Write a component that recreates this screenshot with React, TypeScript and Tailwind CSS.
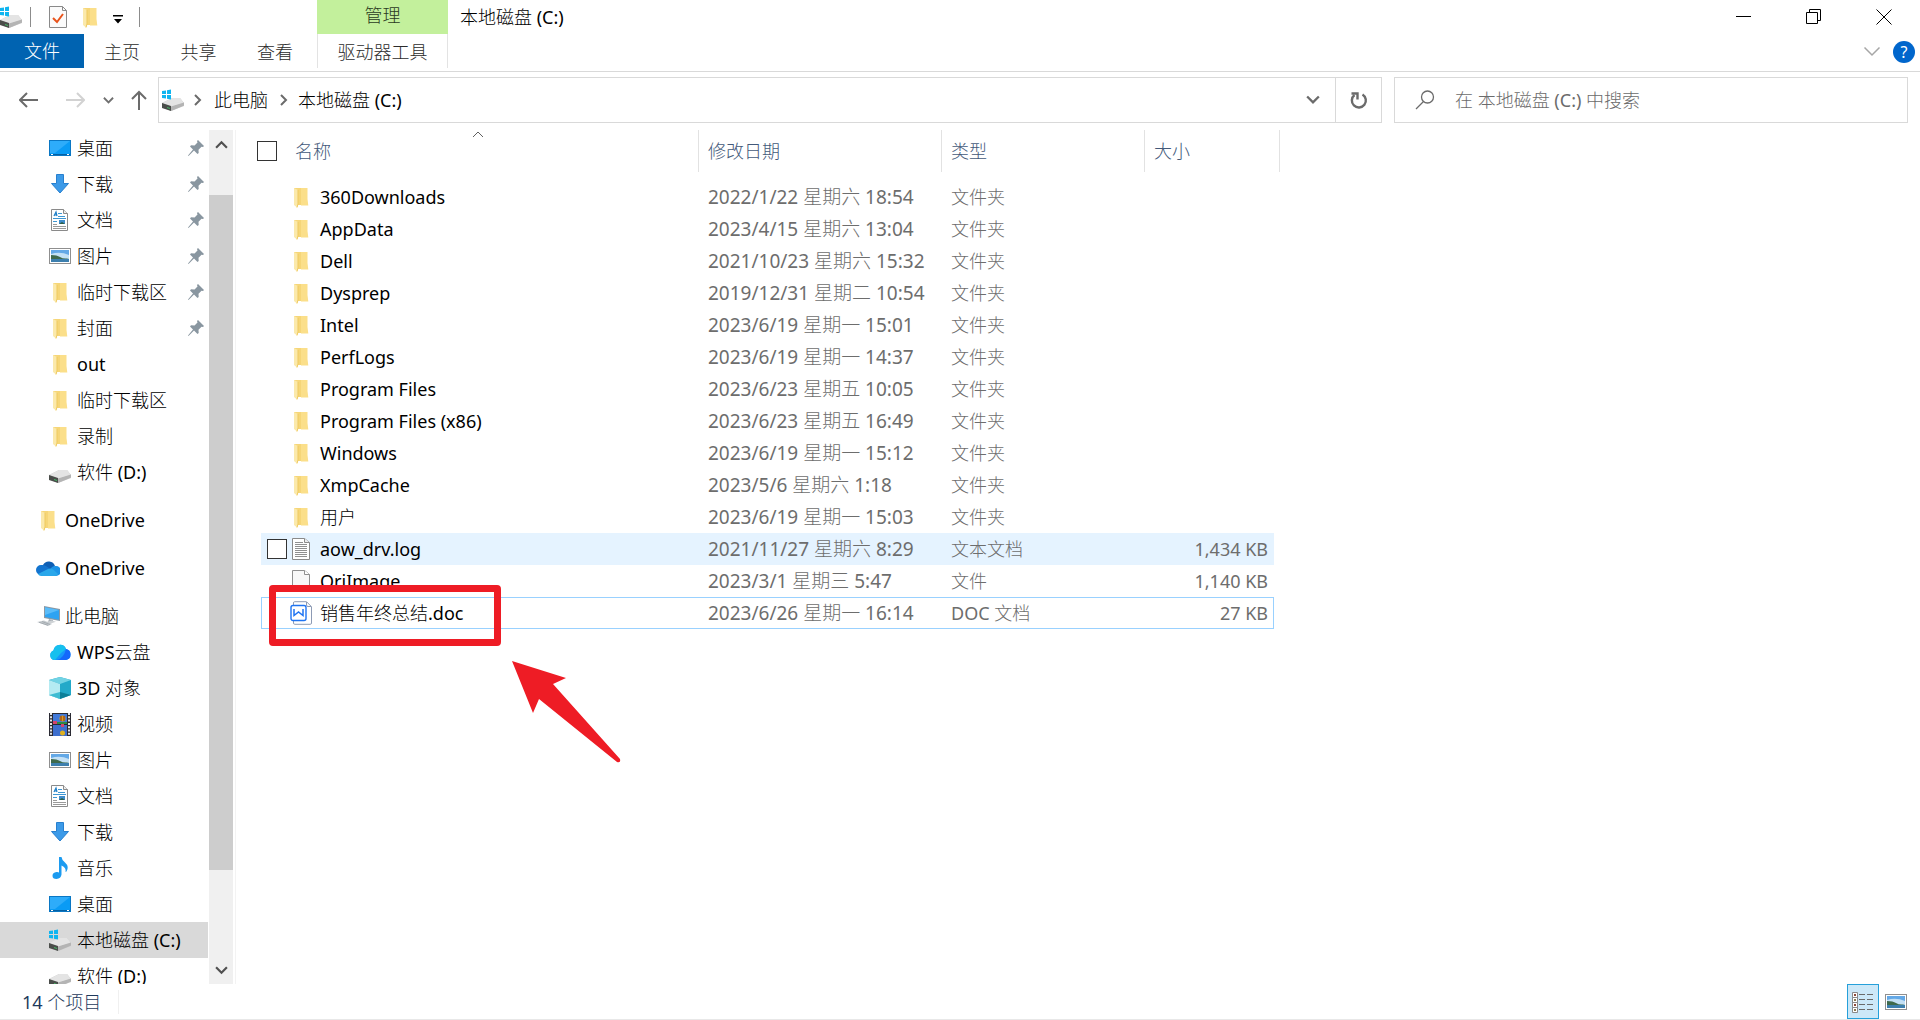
import type { ReactNode } from 'react';

/* ---------- Icons ---------- */

function FolderIcon() {
    return (
        <svg className="w-[15px] h-[21px] shrink-0" viewBox="0 0 15 21">
            <path d="M0 1h12v13l1.500 4H0z" fill="#f6d678" />
            <path d="M7 1h6.500v11l.8 6.500H7z" fill="#fbdf8a" />
            <path d="M0 1l4 2v14l-1 3.500L0 18z" fill="#fbe9ab" />
            <path d="M4 3v14l-1 3.500" fill="none" stroke="#eec95f" strokeWidth="1" />
        </svg>
    );
}

function DriveIcon({ system }: { system?: boolean }) {
    return (
        <svg className="w-[22px] h-[22px] shrink-0" viewBox="0 0 22 22">
            <path d="M0 14l10-5h8l4 5v3l-13 5-9-4z" fill="#c9c9c9" />
            <path d="M0 14l10-5h8l4 5-13 4z" fill="#e4e4e4" />
            <path d="M0 14l9 3v5l-9-3z" fill="#4a4d4a" />
            <path d="M9 17.500l13-4v3L9 22z" fill="#b4b4b4" />
            <path d="M5 18l3 1v1l-3-1z" fill="#45b864" />
            {system && (
                <path d="M0 2l4-.6V5H0zM5 1.200l4-.6V5H5zM0 6h4v3.600L0 9zM5 6h4v4.400L5 9.800z" fill="#0fb5f0" />
            )}
        </svg>
    );
}

function DesktopIcon() {
    return (
        <svg className="w-[22px] h-[22px] shrink-0" viewBox="0 0 22 22">
            <rect x="0.500" y="3.500" width="21" height="15" fill="#0a9bf5" stroke="#0a77c4" />
            <path d="M1 4h20L6 16H1z" fill="#2eacfa" />
            <path d="M1 17.500h20" stroke="#0560a3" strokeWidth="1" />
            <path d="M2 17.500h2M18 17.500h2" stroke="#fff" strokeWidth="1" />
        </svg>
    );
}

function DownloadIcon() {
    return (
        <svg className="w-[22px] h-[22px] shrink-0" viewBox="0 0 22 22">
            <path d="M7.500 1.500h7v9h5L11 20 2.500 10.500h5z" fill="#3c9ae8" stroke="#2880cf" />
        </svg>
    );
}

function DocumentIcon() {
    return (
        <svg className="w-[22px] h-[22px] shrink-0" viewBox="0 0 22 22">
            <path d="M2.500.500h12l4 4v17h-16z" fill="#fff" stroke="#8a8a8a" />
            <path d="M14.500.500v4h4" fill="#eee" stroke="#8a8a8a" />
            <path d="M5 7l2-4 1 4M6 6h2" stroke="#1e7fc8" fill="none" strokeWidth="1.200" />
            <path d="M9 4.500h4M9 7.500h7M4 9.500h13M4 12.500h4" stroke="#3e97d3" />
            <path d="M4 15.500h4M4 17.500h13M4 19.500h13" stroke="#9a9a9a" />
            <rect x="10" y="11" width="6" height="4" fill="#3f8ccb" />
            <path d="M10 15l3-2 3 2z" fill="#2f5f46" />
        </svg>
    );
}

function PictureIcon() {
    return (
        <svg className="w-[22px] h-[22px] shrink-0" viewBox="0 0 22 22">
            <rect x="0.500" y="3.500" width="21" height="15" fill="#fff" stroke="#8f8f8f" />
            <rect x="2" y="5" width="18" height="12" fill="#63a8e6" />
            <path d="M2 9q9-3 18 1v4H2z" fill="#c3e0f5" />
            <path d="M2 10q6 0 9 2t7 1.500l2 .5H2z" fill="#3f6a4c" />
            <path d="M2 14h18v3H2z" fill="#3d7fae" />
        </svg>
    );
}

function OneDriveIcon() {
    return (
        <svg className="w-6 h-4 shrink-0" viewBox="0 0 24 16">
            <path d="M7 5a6.500 6.500 0 0 1 12 1l-6 5-8-2z" fill="#0f5fb4" />
            <path d="M5 15a5 5 0 0 1 0-10q3-.5 5 1l6 4-8 6z" fill="#1374cf" />
            <path d="M15 8q2-2.500 5-2a4.800 4.800 0 0 1 0 10h-8z" fill="#1c93e6" />
            <path d="M2 14l10-5q3-1.200 5 .3l5 4.700q-1 2-3 2H5q-2 0-3-2z" fill="#2aa7ea" />
        </svg>
    );
}

function ComputerIcon() {
    return (
        <svg className="w-[23px] h-[21px] shrink-0" viewBox="0 0 23 21">
            <path d="M7 0l16 3v12L7 12z" fill="#8b98a3" />
            <path d="M8 1.200l14 2.700v9.800L8 11z" fill="#2ea3f2" />
            <path d="M8 1.200l14 2.700L8 9z" fill="#5bbcf8" />
            <path d="M12 13l4 1v2l-5 0z" fill="#a9afb5" />
            <path d="M9 16l6-1.500 4 1.300-6 2z" fill="#cfd3d6" />
            <path d="M0 16l7-1.500 8 3.500-4 2z" fill="#c4c9cd" />
            <path d="M2 16.300l9 3M5 15.500l8 3" stroke="#8f979e" strokeWidth=".6" />
        </svg>
    );
}

function WpsCloudIcon() {
    return (
        <svg className="w-[22px] h-[22px] shrink-0" viewBox="0 0 22 22">
            <path d="M5 19a5 5 0 0 1-.5-9.500A6.500 6.500 0 0 1 17 8a5.600 5.600 0 0 1 0 11z" fill="#1597fb" />
            <path d="M4.500 9.500A6.500 6.500 0 0 1 17 8l-5 4-6 7H5a5 5 0 0 1-.5-9.500z" fill="#16c0ee" />
            <path d="M17 8a5.600 5.600 0 0 1 0 11H8q7-2 9-11z" fill="#1468fb" />
        </svg>
    );
}

function CubeIcon() {
    return (
        <svg className="w-[22px] h-[22px] shrink-0" viewBox="0 0 22 22">
            <path d="M11 0l11 3v15l-11 4-11-4V3z" fill="#23a9c9" />
            <path d="M11 0l11 3-11 4L0 3z" fill="#72d3e4" />
            <path d="M0 3l11 4v15L0 18z" fill="#b5ebf2" />
            <path d="M0 18l11-3v7z" fill="#3fbcd2" />
            <path d="M11 15l11 3-11 4z" fill="#0d7f98" />
        </svg>
    );
}

function VideoIcon() {
    return (
        <svg className="w-[22px] h-[23px] shrink-0" viewBox="0 0 22 23">
            <rect width="22" height="23" fill="#2a2a33" />
            <path d="M2 0v23M20 0v23" stroke="#e4e4e4" strokeWidth="2" strokeDasharray="2 1.300" />
            <rect x="4" y="1" width="14" height="10" fill="#4179d8" />
            <rect x="4" y="12" width="14" height="11" fill="#3d6ecd" />
            <circle cx="13.500" cy="5.500" r="3" fill="#d99b1c" />
            <path d="M12 3v5M15 3v5" stroke="#8a3018" />
            <path d="M4 8h4v3H4zM12 11h3v3h-3z" fill="#d4446c" />
            <path d="M8 9h10v2H8z" fill="#2c8a43" />
            <circle cx="13.500" cy="20" r="2.500" fill="#e0b11f" />
        </svg>
    );
}

function MusicIcon() {
    return (
        <svg className="w-[22px] h-[22px] shrink-0" viewBox="0 0 22 22">
            <path d="M10 0h2.500q.3 3 3.500 5.500 4.500 4 1.500 9l-1 .5q1-4.500-4-6.500v9q-.5 4-5 4.500-4 0-4-3.200 0-3.300 4-3.800 1.500-.2 2.500.4z" fill="#1c9bf0" />
        </svg>
    );
}

function LogFileIcon() {
    return (
        <svg className="w-[18px] h-[22px] shrink-0" viewBox="0 0 18 22">
            <path d="M.500.500h12l5 4v17H.500z" fill="#fff" stroke="#8a8a8a" />
            <path d="M12.500.500v4h5" fill="#eee" stroke="#8a8a8a" />
            <path d="M3 4.500h8M3 6.500h12M3 8.500h12M3 10.500h12M3 12.500h12M3 14.500h12M3 16.500h12M3 18.500h12" stroke="#909090" />
        </svg>
    );
}

function BlankFileIcon() {
    return (
        <svg className="w-[18px] h-[22px] shrink-0" viewBox="0 0 18 22">
            <path d="M.500.500h12l5 4v17H.500z" fill="#f8f8f8" stroke="#8f8f8f" />
            <path d="M12.500.500v4h5" fill="#fff" stroke="#8f8f8f" />
        </svg>
    );
}

function WpsDocIcon() {
    return (
        <svg className="w-[23px] h-6 shrink-0" viewBox="0 0 23 24">
            <path d="M4.500.700h12l5 5V22q0 1.300-1.300 1.300H4.800q-1.300 0-1.300-1.300V2q0-1.300 1-1.300z" fill="#fff" stroke="#8d9bb5" />
            <path d="M16.500 1v3q0 1.500 1.500 1.500h3" fill="none" stroke="#8d9bb5" />
            <rect x="1" y="4.500" width="15" height="15" rx="2" fill="#fff" stroke="#1f74f2" strokeWidth="1.400" />
            <path d="M4 8v6.500l4.500-3.500 4.500 3.500V8" fill="none" stroke="#1f74f2" strokeWidth="1.500" />
        </svg>
    );
}

function PinIcon() {
    return (
        <svg className="w-4 h-4 shrink-0" viewBox="0 0 16 16">
            <path d="M10 0l6 6-1 1-1.500-.3-3 3 .2 3.300-1.200 1L6 10.500.500 16 0 15.500 5 9.500 2 6.500l1-1.200 3.500.2 3-3L9 1z" fill="#8996a0" />
        </svg>
    );
}

function Chevron({ dir, className }: { dir: 'up' | 'down' | 'right'; className: string }) {
    const d = { up: 'M1 9l5-5 5 5', down: 'M1 3l5 5 5-5', right: 'M3 1l5 5-5 5' }[dir];
    return (
        <svg className={className} viewBox="0 0 12 12" fill="none" stroke="currentColor">
            <path d={d} />
        </svg>
    );
}

/* ---------- Data ---------- */

type NavItem = { label: string; icon: ReactNode; pinned?: boolean; root?: boolean; selected?: boolean };

const navItems: NavItem[] = [
    { label: '桌面', icon: <DesktopIcon />, pinned: true },
    { label: '下载', icon: <DownloadIcon />, pinned: true },
    { label: '文档', icon: <DocumentIcon />, pinned: true },
    { label: '图片', icon: <PictureIcon />, pinned: true },
    { label: '临时下载区', icon: <FolderIcon />, pinned: true },
    { label: '封面', icon: <FolderIcon />, pinned: true },
    { label: 'out', icon: <FolderIcon /> },
    { label: '临时下载区', icon: <FolderIcon /> },
    { label: '录制', icon: <FolderIcon /> },
    { label: '软件 (D:)', icon: <DriveIcon /> },
    { label: 'OneDrive', icon: <FolderIcon />, root: true },
    { label: 'OneDrive', icon: <OneDriveIcon />, root: true },
    { label: '此电脑', icon: <ComputerIcon />, root: true },
    { label: 'WPS云盘', icon: <WpsCloudIcon /> },
    { label: '3D 对象', icon: <CubeIcon /> },
    { label: '视频', icon: <VideoIcon /> },
    { label: '图片', icon: <PictureIcon /> },
    { label: '文档', icon: <DocumentIcon /> },
    { label: '下载', icon: <DownloadIcon /> },
    { label: '音乐', icon: <MusicIcon /> },
    { label: '桌面', icon: <DesktopIcon /> },
    { label: '本地磁盘 (C:)', icon: <DriveIcon system />, selected: true },
    { label: '软件 (D:)', icon: <DriveIcon /> },
];

type FileRow = { name: string; date: string; type: string; size?: string; icon?: ReactNode; state?: 'hover' | 'focus' };

const files: FileRow[] = [
    { name: '360Downloads', date: '2022/1/22 星期六 18:54', type: '文件夹' },
    { name: 'AppData', date: '2023/4/15 星期六 13:04', type: '文件夹' },
    { name: 'Dell', date: '2021/10/23 星期六 15:32', type: '文件夹' },
    { name: 'Dysprep', date: '2019/12/31 星期二 10:54', type: '文件夹' },
    { name: 'Intel', date: '2023/6/19 星期一 15:01', type: '文件夹' },
    { name: 'PerfLogs', date: '2023/6/19 星期一 14:37', type: '文件夹' },
    { name: 'Program Files', date: '2023/6/23 星期五 10:05', type: '文件夹' },
    { name: 'Program Files (x86)', date: '2023/6/23 星期五 16:49', type: '文件夹' },
    { name: 'Windows', date: '2023/6/19 星期一 15:12', type: '文件夹' },
    { name: 'XmpCache', date: '2023/5/6 星期六 1:18', type: '文件夹' },
    { name: '用户', date: '2023/6/19 星期一 15:03', type: '文件夹' },
    { name: 'aow_drv.log', date: '2021/11/27 星期六 8:29', type: '文本文档', size: '1,434 KB', icon: <LogFileIcon />, state: 'hover' },
    { name: 'OriImage', date: '2023/3/1 星期三 5:47', type: '文件', size: '1,140 KB', icon: <BlankFileIcon /> },
    { name: '销售年终总结.doc', date: '2023/6/26 星期一 16:14', type: 'DOC 文档', size: '27 KB', icon: <WpsDocIcon />, state: 'focus' },
];

/* ---------- Sections ---------- */

function TitleBar() {
    return (
        <header className="flex h-[34px] shrink-0">
            <div className="flex w-[317px] items-center">
                <DriveIcon system />
                <span className="ml-2 h-5 w-px bg-[#8c8c8c]" />
                <button aria-label="属性" className="ml-[18px]">
                    <svg className="w-[18px] h-[22px]" viewBox="0 0 18 22">
                        <path d="M.500.500h13l4 4v17H.500z" fill="#fbfbfb" stroke="#8a8a8a" />
                        <path d="M13.500.500v4h4" fill="none" stroke="#8a8a8a" />
                        <path d="M4 12l4 4 6-8" fill="none" stroke="#e8531b" strokeWidth="2" />
                    </svg>
                </button>
                <button aria-label="新建文件夹" className="ml-4"><FolderIcon /></button>
                <button aria-label="自定义快速访问工具栏" className="ml-[15px] pt-1">
                    <svg className="w-[10px] h-3" viewBox="0 0 10 12">
                        <path d="M0 2h10v1.500H0zM1 6h8l-4 4.500z" fill="#000" />
                    </svg>
                </button>
                <span className="ml-4 h-5 w-px bg-[#8c8c8c]" />
            </div>
            <div className="flex w-[131px] items-center justify-center bg-[#c3f09c] pb-1 text-[#2b3a1f]">管理</div>
            <h1 className="flex flex-1 items-center pl-3">本地磁盘 (C:)</h1>
            <div className="flex items-center gap-[54px] pr-7">
                <button aria-label="最小化">
                    <svg className="w-4 h-4" viewBox="0 0 16 16"><path d="M0 7.500h15" stroke="#000" /></svg>
                </button>
                <button aria-label="向下还原">
                    <svg className="w-4 h-4" viewBox="0 0 16 16" fill="none" stroke="#000">
                        <path d="M.500 3.500h11v11H.500zM3.500 3.500v-3h11v11h-3" />
                    </svg>
                </button>
                <button aria-label="关闭">
                    <svg className="w-4 h-4" viewBox="0 0 16 16"><path d="M.500.500l15 15M15.500.500l-15 15" stroke="#000" /></svg>
                </button>
            </div>
        </header>
    );
}

function RibbonTabs() {
    return (
        <nav className="flex h-[38px] shrink-0 border-b border-[#d9d9d9] pb-[3px] text-[#2b2b2b]">
            <button className="w-[84px] bg-[#0063b1] text-white">文件</button>
            <button className="w-[76px] pt-[2px]">主页</button>
            <button className="w-[77px] pt-[2px]">共享</button>
            <button className="mr-1 w-[76px] pt-[2px]">查看</button>
            <button className="w-[131px] border-x border-[#e3e3e3] pt-[2px]">驱动器工具</button>
            <div className="flex flex-1 items-center justify-end gap-3 pr-[5px] pt-[2px]">
                <button aria-label="展开功能区" className="text-[#a6a6a6]"><Chevron dir="down" className="w-[18px] h-[18px]" /></button>
                <button aria-label="帮助" className="h-[22px] w-[22px] rounded-full bg-[#0066cc] text-base leading-[22px] text-white">?</button>
            </div>
        </nav>
    );
}

function AddressRow() {
    return (
        <div className="flex shrink-0 items-center pt-[5px] pr-3 pb-[7px]">
            <div className="flex w-[158px] items-center">
                <button aria-label="后退" className="ml-[19px]">
                    <svg className="w-5 h-5" viewBox="0 0 20 20" fill="none" stroke="#6b6b6b" strokeWidth="2"><path d="M19 10H1M8 3l-7 7 7 7" /></svg>
                </button>
                <button aria-label="前进" className="ml-[26px]">
                    <svg className="w-5 h-5" viewBox="0 0 20 20" fill="none" stroke="#d2d2d2" strokeWidth="2"><path d="M1 10h18M12 3l7 7-7 7" /></svg>
                </button>
                <button aria-label="最近浏览的位置" className="ml-[18px] text-[#707070]"><Chevron dir="down" className="w-[11px] h-[11px] stroke-2" /></button>
                <button aria-label="上移" className="ml-4">
                    <svg className="w-[18px] h-5" viewBox="0 0 18 20" fill="none" stroke="#6b6b6b" strokeWidth="2"><path d="M9 20V2M2 9l7-7 7 7" /></svg>
                </button>
            </div>
            <div className="flex h-[46px] flex-1 items-center border border-[#d9d9d9]">
                <span className="ml-[3px]"><DriveIcon system /></span>
                <Chevron dir="right" className="ml-2 w-3 h-3 stroke-2 text-[#6b6b6b]" />
                <button className="ml-[10px]">此电脑</button>
                <Chevron dir="right" className="ml-[10px] w-3 h-3 stroke-2 text-[#6b6b6b]" />
                <button className="ml-2">本地磁盘 (C:)</button>
                <button aria-label="以前的位置" className="ml-auto mr-[15px] text-[#6b6b6b]"><Chevron dir="down" className="w-[14px] h-[14px] stroke-2" /></button>
                <button aria-label="刷新" className="flex h-full w-[46px] items-center justify-center border-l border-[#d9d9d9]">
                    <svg className="w-[18px] h-[18px]" viewBox="0 0 18 18" fill="none" stroke="#6b6b6b" strokeWidth="2.400">
                        <path d="M12.500 3.500a7 7 0 1 1-8 .5" />
                        <path d="M1.500 2.500h6v6" />
                    </svg>
                </button>
            </div>
            <label className="ml-3 flex h-[46px] w-[514px] items-center border border-[#d9d9d9] pl-5">
                <svg className="w-5 h-5 shrink-0" viewBox="0 0 20 20" fill="none" stroke="#6b6b6b" strokeWidth="1.300">
                    <circle cx="12.500" cy="7" r="6" />
                    <path d="M8.500 11.500L1 19" />
                </svg>
                <input type="search" aria-label="搜索" placeholder="在 本地磁盘 (C:) 中搜索" className="ml-5 flex-1 outline-none placeholder:text-[#6b6b6b]" />
            </label>
        </div>
    );
}

function Sidebar() {
    return (
        <aside className="flex w-[236px] shrink-0 border-r border-[#f3f3f3]">
            <ul className="w-[209px] overflow-hidden pr-px">
                {navItems.map((item, i) => (
                    <li key={i} className={item.root ? 'mt-3' : ''}>
                        <a
                            href="#"
                            className={`flex h-9 items-center ${item.root ? 'pl-[35px]' : 'pl-[47px]'} ${item.selected ? 'bg-[#d9d9d9]' : ''}`}
                        >
                            <span className="flex w-[26px] justify-center">{item.icon}</span>
                            <span className="ml-1 flex-1">{item.label}</span>
                            {item.pinned && <span className="mr-1"><PinIcon /></span>}
                        </a>
                    </li>
                ))}
            </ul>
            <div className="flex w-6 flex-col bg-[#f0f0f0]">
                <button aria-label="向上滚动" className="flex h-7 items-center justify-center text-[#505050]">
                    <Chevron dir="up" className="w-[13px] h-[13px] stroke-2" />
                </button>
                <div className="flex flex-1 flex-col pt-[37px] pb-[86px]">
                    <div className="flex-1 bg-[#cdcdcd]" />
                </div>
                <button aria-label="向下滚动" className="flex h-7 items-center justify-center text-[#505050]">
                    <Chevron dir="down" className="w-[13px] h-[13px] stroke-2" />
                </button>
            </div>
        </aside>
    );
}

const checkbox = 'block h-5 w-5 shrink-0 appearance-none border border-[#333] bg-white';

function FileTable() {
    const cellState = (state?: string) =>
        state === 'hover' ? 'bg-[#e5f3ff]' : state === 'focus' ? 'border-y border-[#99d1ff]' : '';
    return (
        <table className="w-[1023px] table-fixed border-separate border-spacing-0 text-left">
            <colgroup>
                <col className="w-1" />
                <col className="w-[438px]" />
                <col className="w-[243px]" />
                <col className="w-[203px]" />
                <col className="w-[129px]" />
                <col className="w-[6px]" />
            </colgroup>
            <thead className="text-[#43597a]">
                <tr>
                    <th colSpan={2} className="pb-[9px] font-normal">
                        <div className="relative flex h-[42px] items-center border-r border-[#e2e2e2]">
                            <input type="checkbox" aria-label="全选" className={checkbox} />
                            <span className="ml-[18px]">名称</span>
                            <Chevron dir="up" className="absolute left-[215px] top-[-2px] w-3 h-3 text-[#606060]" />
                        </div>
                    </th>
                    <th className="pb-[9px] font-normal">
                        <div className="flex h-[42px] items-center border-r border-[#e2e2e2] pl-[9px]">修改日期</div>
                    </th>
                    <th className="pb-[9px] font-normal">
                        <div className="flex h-[42px] items-center border-r border-[#e2e2e2] pl-[9px]">类型</div>
                    </th>
                    <th colSpan={2} className="pb-[9px] font-normal">
                        <div className="flex h-[42px] items-center border-r border-[#e2e2e2] pl-[9px]">大小</div>
                    </th>
                </tr>
            </thead>
            <tbody className="text-[#6d6d6d]">
                {files.map((file) => (
                    <tr key={file.name} className="h-8">
                        <td />
                        <td className={`${cellState(file.state)} ${file.state === 'focus' ? 'border-l' : ''}`}>
                            <div className="flex items-center text-black">
                                <span className={`flex justify-end ${file.state === 'focus' ? 'w-[25px]' : 'w-[26px]'}`}>
                                    {file.state === 'hover' && <input type="checkbox" aria-label={file.name} className={checkbox} />}
                                </span>
                                <span className="flex w-7 justify-center">{file.icon ?? <FolderIcon />}</span>
                                <span className="ml-[5px] leading-[30px]">{file.name}</span>
                            </div>
                        </td>
                        <td className={`pl-[9px] text-[19px] leading-[30px] ${cellState(file.state)}`}>{file.date}</td>
                        <td className={`pl-[9px] leading-[30px] ${cellState(file.state)}`}>{file.type}</td>
                        <td className={`text-right leading-[30px] ${cellState(file.state)} ${file.state === 'focus' ? 'border-r pr-[5px]' : 'pr-[6px]'}`}>
                            {file.size}
                        </td>
                        <td />
                    </tr>
                ))}
            </tbody>
        </table>
    );
}

function StatusBar() {
    return (
        <footer className="flex h-9 shrink-0 items-center border-b border-[#e8e8e8] pl-[22px] pr-[13px] text-[#1e395b]">
            <span>14 个项目</span>
            <span className="ml-[17px] h-6 w-px bg-[#f0f0f0]" />
            <div className="ml-auto flex items-center gap-[6px]">
                <button aria-label="详细信息" className="flex h-[35px] w-8 items-center justify-center border border-[#26a0da] bg-[#cce8f8]">
                    <svg className="w-[22px] h-[22px]" viewBox="0 0 22 22" fill="none">
                        <path d="M.500 1.500h5v5h-5zM.500 6.500h5v5h-5zM.500 11.500h5v5h-5zM.500 16.500h5v5h-5z" fill="#fff" stroke="#8a8a8a" />
                        <path d="M2 4h2M2 14h2" stroke="#8a4a3a" strokeWidth="2" />
                        <path d="M2 9h2M2 19h2" stroke="#8a7a50" strokeWidth="2" />
                        <path d="M7 3.500h6M15 3.500h6M7 8.500h6M15 8.500h6M7 13.500h6M15 13.500h6M7 18.500h6M15 18.500h6" stroke="#6a6a6a" />
                    </svg>
                </button>
                <button aria-label="大缩略图"><PictureIcon /></button>
            </div>
        </footer>
    );
}

export default function App() {
    return (
        <div className="flex h-screen flex-col overflow-hidden bg-white font-['Noto_Sans','Noto_Sans_CJK_SC_Light','Noto_Sans_CJK_SC',sans-serif] text-[18px] leading-6 text-black">
            <TitleBar />
            <RibbonTabs />
            <AddressRow />
            <div className="flex min-h-0 flex-1">
                <Sidebar />
                <main className="relative flex-1 pl-[21px]">
                    <FileTable />
                    {/* Callout over the .doc row */}
                    <div className="pointer-events-none absolute left-[33px] top-[455px] h-[61px] w-[232px] rounded-sm border-[7px] border-[#ee1c25]" />
                    <svg className="pointer-events-none absolute left-[276px] top-[531px] h-[102px] w-[110px]" viewBox="0 0 110 102">
                        <path d="M0 0l54 17-13 6 67 75q1 4-3 3L27 38l-6 14z" fill="#ee1c25" />
                    </svg>
                </main>
            </div>
            <StatusBar />
        </div>
    );
}
